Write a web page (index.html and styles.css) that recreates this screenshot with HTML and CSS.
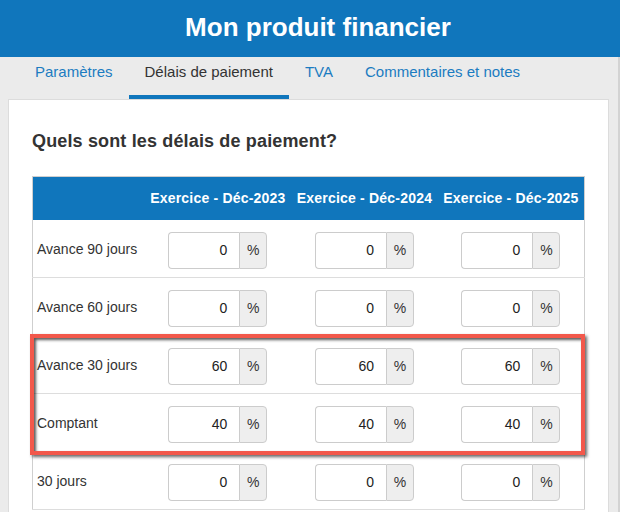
FILE: index.html
```html
<!DOCTYPE html>
<html lang="fr">
<head>
<meta charset="utf-8">
<title>Mon produit financier</title>
<link rel="stylesheet" href="styles.css">
</head>
<body>
<header class="topbar"><h1>Mon produit financier</h1></header>
<div class="page">
  <nav class="tabs">
    <a class="tab">Paramètres</a>
    <a class="tab active">Délais de paiement</a>
    <a class="tab">TVA</a>
    <a class="tab">Commentaires et notes</a>
  </nav>
  <section class="card">
    <h2>Quels sont les délais de paiement?</h2>
    <div class="table-wrap">
      <table class="terms">
        <colgroup><col class="c-label"><col><col><col></colgroup>
        <thead>
          <tr><th></th><th>Exercice - Déc-2023</th><th>Exercice - Déc-2024</th><th>Exercice - Déc-2025</th></tr>
        </thead>
        <tbody>
          <tr>
            <td class="lbl"><span>Avance 90 jours</span></td>
            <td><div class="group"><div class="field">0</div><div class="addon">%</div></div></td>
            <td><div class="group"><div class="field">0</div><div class="addon">%</div></div></td>
            <td><div class="group"><div class="field">0</div><div class="addon">%</div></div></td>
          </tr>
          <tr>
            <td class="lbl"><span>Avance 60 jours</span></td>
            <td><div class="group"><div class="field">0</div><div class="addon">%</div></div></td>
            <td><div class="group"><div class="field">0</div><div class="addon">%</div></div></td>
            <td><div class="group"><div class="field">0</div><div class="addon">%</div></div></td>
          </tr>
          <tr>
            <td class="lbl"><span>Avance 30 jours</span></td>
            <td><div class="group"><div class="field">60</div><div class="addon">%</div></div></td>
            <td><div class="group"><div class="field">60</div><div class="addon">%</div></div></td>
            <td><div class="group"><div class="field">60</div><div class="addon">%</div></div></td>
          </tr>
          <tr>
            <td class="lbl"><span>Comptant</span></td>
            <td><div class="group"><div class="field">40</div><div class="addon">%</div></div></td>
            <td><div class="group"><div class="field">40</div><div class="addon">%</div></div></td>
            <td><div class="group"><div class="field">40</div><div class="addon">%</div></div></td>
          </tr>
          <tr>
            <td class="lbl"><span>30 jours</span></td>
            <td><div class="group"><div class="field">0</div><div class="addon">%</div></div></td>
            <td><div class="group"><div class="field">0</div><div class="addon">%</div></div></td>
            <td><div class="group"><div class="field">0</div><div class="addon">%</div></div></td>
          </tr>
        </tbody>
      </table>
      <div class="highlight"></div>
    </div>
  </section>
</div>
</body>
</html>
```

FILE: styles.css
```css
* { box-sizing: border-box; }
html, body {
  margin: 0;
  padding: 0;
  height: 100%;
  overflow: hidden;
}
body {
  background: #ebebeb;
  font-family: "Liberation Sans", Arial, sans-serif;
  color: #333;
}
.topbar {
  background: #1076bc;
  height: 57px;
}
.topbar h1 {
  margin: 0;
  padding-left: 16px;
  text-align: center;
  color: #fff;
  font-size: 26px;
  font-weight: bold;
  line-height: 54px;
}
.page {
  height: calc(100% - 57px);
  padding: 0 9px 0 8px;
  border-right: 2px solid #d3d3d3;
}
.tabs {
  display: flex;
  height: 42px;
  padding-left: 11px;
}
.tab {
  display: block;
  height: 42px;
  padding: 5px 16px 0;
  line-height: 20px;
  font-size: 15px;
  color: #1b7cc1;
  border-bottom: 4px solid transparent;
  white-space: nowrap;
}
.tab.active {
  color: #333;
  border-bottom-color: #1076bc;
}
.card {
  background: #fff;
  border: 1px solid #dcdcdc;
  border-bottom: none;
  height: calc(100% - 42px);
  padding: 30px 23px 0;
}
.card h2 {
  margin: 0 0 24px;
  font-size: 18px;
  line-height: 22px;
  letter-spacing: 0.15px;
  font-weight: bold;
  color: #333;
}
.table-wrap {
  position: relative;
}
.terms {
  width: 100%;
  border-collapse: collapse;
  table-layout: fixed;
  border: 1px solid #cfcfcf;
}
.c-label { width: 112px; }
.terms th {
  background: #1076bc;
  color: #fff;
  height: 43px;
  padding: 0;
  font-size: 14px;
  letter-spacing: 0.2px;
  font-weight: bold;
  text-align: center;
  white-space: nowrap;
}
.terms td {
  padding: 12px 0 8px;
  border-bottom: 1px solid #dddddd;
  vertical-align: top;
}
.terms td.lbl {
  padding-left: 4px;
  font-size: 14px;
  color: #333;
}
.lbl span {
  display: block;
  padding-top: 7px;
  line-height: 20px;
  white-space: nowrap;
}
.group {
  display: flex;
  width: 99px;
  height: 37px;
  margin: 0 auto;
  font-size: 14px;
}
.field {
  width: 71px;
  border: 1px solid #cccccc;
  border-right: none;
  border-radius: 4px 0 0 4px;
  text-align: right;
  padding-right: 12px;
  line-height: 35px;
  color: #222;
  background: #fff;
}
.addon {
  width: 28px;
  border: 1px solid #cccccc;
  border-radius: 0 4px 4px 0;
  background: #eeeeee;
  text-align: center;
  line-height: 35px;
  color: #333;
}
.highlight {
  position: absolute;
  left: -2px;
  top: 158px;
  width: 555px;
  height: 121px;
  border: 4px solid #f2584b;
  box-shadow: inset 2px 2px 3px rgba(0,0,0,0.65), 2px 2px 3px rgba(0,0,0,0.6);
  pointer-events: none;
}
```
